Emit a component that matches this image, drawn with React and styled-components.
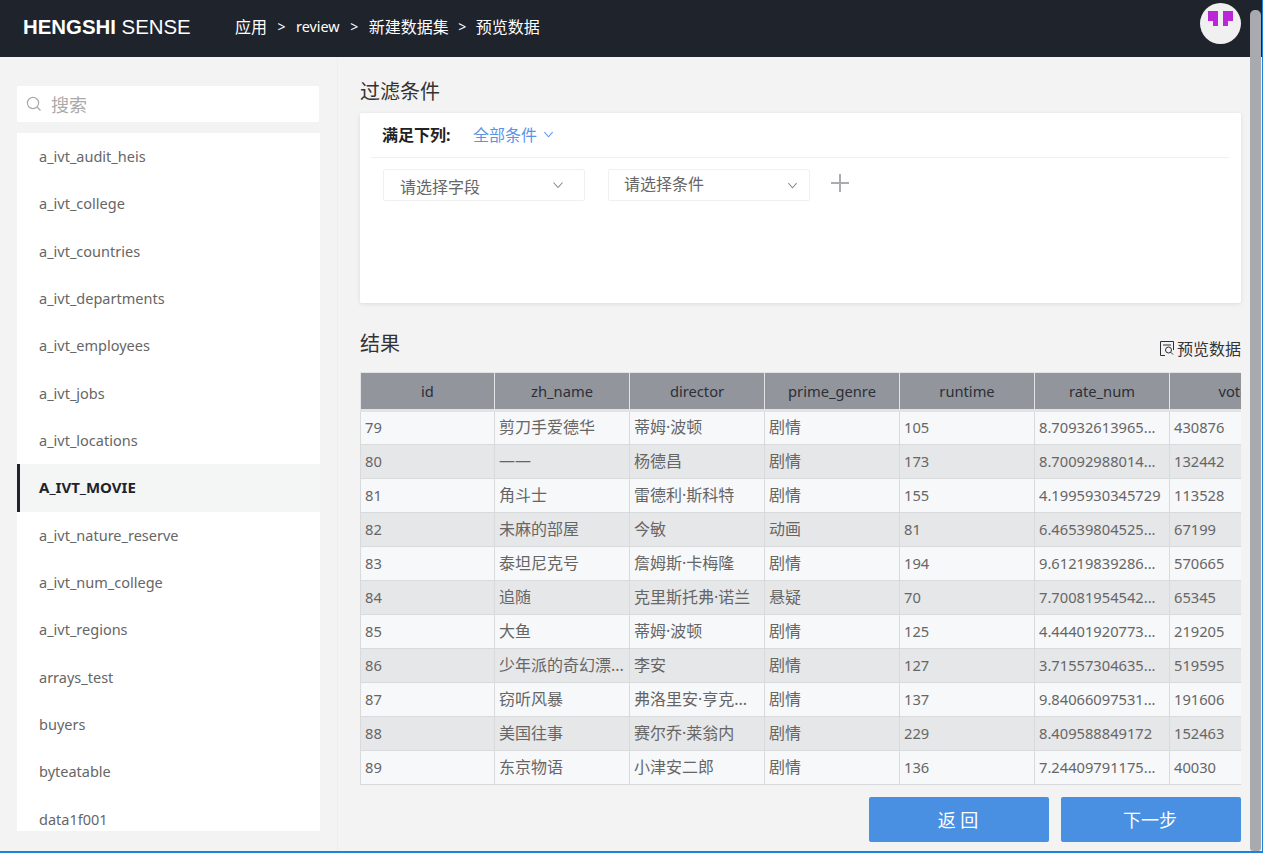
import React from 'react';
import styled, { createGlobalStyle } from 'styled-components';

const FONT = '"Noto Sans", "Noto Sans CJK SC", sans-serif';

const Global = createGlobalStyle`
  html, body { margin: 0; padding: 0; height: 100%; overflow: hidden; background: #f3f3f3; }
  body { font-family: ${FONT}; }
  * { box-sizing: border-box; }
`;

const Frame = styled.div`
  position: relative;
  width: 1263px;
  height: 853px;
  display: flex;
  flex-direction: column;
  background: #f3f3f3;
  border-right: 1px solid #1c82dc;
  border-bottom: 2px solid #1c82dc;
  overflow: hidden;
`;

const Header = styled.header`
  flex: none;
  height: 57px;
  background: #1e232c;
  display: flex;
  align-items: center;
  padding-left: 23px;
  color: #fff;
`;

const Logo = styled.div`
  font-family: "Liberation Sans", Arial, sans-serif;
  font-size: 20.4px;
  width: 212px;
  white-space: nowrap;
  margin-top: -3px;
  b { font-weight: 700; }
`;

const Crumbs = styled.nav`
  display: flex;
  align-items: center;
  font-size: 16px;
  margin-top: -5px;
`;

const CrumbLatin = styled.span`
  font-size: 14.4px;
`;

const Sep = styled.span`
  width: ${p => p.$w}px;
  text-align: center;
  font-size: 14px;
`;

const Avatar = styled.div`
  margin-left: auto;
  margin-right: 21px;
  margin-top: -10px;
  width: 41px;
  height: 41px;
  padding-top: 8px;
  border-radius: 50%;
  background: #f0f0f0;
  display: flex;
  align-items: flex-start;
  justify-content: center;
`;

const Scroll = styled.div`
  position: absolute;
  top: 10px;
  right: 1px;
  bottom: 0;
  width: 11px;
  background: #a9aaaf;
  border-radius: 5px 5px 3px 3px;
`;

const Body = styled.div`
  flex: 1;
  min-height: 0;
  display: flex;
`;

const Side = styled.aside`
  flex: none;
  width: 338px;
  border-right: 1px solid #eeeeee;
  padding: 29px 17px 20px 17px;
  display: flex;
  flex-direction: column;
`;

const Search = styled.div`
  flex: none;
  width: 302px;
  height: 36px;
  background: #fff;
  border-radius: 2px;
  display: flex;
  align-items: center;
  padding-left: 9px;
  gap: 9px;
  color: #aaa;
  font-size: 18px;
`;

const List = styled.ul`
  list-style: none;
  margin: 11px 0 0;
  padding: 0;
  width: 303px;
  height: 698px;
  background: #fff;
  overflow: hidden;
`;

const Item = styled.li`
  height: 47.33px;
  display: flex;
  align-items: center;
  padding-bottom: 1px;
  padding-left: ${p => (p.$active ? '19px' : '22px')};
  font-size: ${p => (p.$active ? '15px' : '14.5px')};
  color: ${p => (p.$active ? '#1e232c' : '#666')};
  font-weight: ${p => (p.$active ? 700 : 400)};
  background: ${p => (p.$active ? '#f4f5f5' : 'transparent')};
  border-left: ${p => (p.$active ? '3px solid #1e232c' : 'none')};
`;

const Main = styled.main`
  flex: 1;
  min-width: 0;
  padding: 20px 21px 0 22px;
  display: flex;
  flex-direction: column;
`;

const Title = styled.h2`
  margin: 0;
  font-size: 20px;
  font-weight: 400;
  line-height: 30px;
  color: #333;
`;

const Panel = styled.section`
  margin-top: 6px;
  width: 881px;
  height: 190px;
  background: #fff;
  border-radius: 2px;
  box-shadow: 0 1px 4px rgba(0, 0, 0, 0.1);
  padding: 0 12px 0 11px;
`;

const MatchRow = styled.div`
  height: 45px;
  border-bottom: 1px solid #f0f0f0;
  display: flex;
  align-items: center;
  padding: 0 0 2px 11px;
  font-size: 16px;
`;

const MatchLabel = styled.strong`
  width: 91px;
  color: #222;
  font-weight: 700;
`;

const MatchValue = styled.span`
  color: #5a94e6;
  display: flex;
  align-items: center;
  gap: 6px;
`;

const Filters = styled.div`
  display: flex;
  align-items: center;
  padding: 11px 0 0 12px;
`;

const Select = styled.div`
  width: 202px;
  height: 32px;
  margin-right: ${p => p.$gap}px;
  border: 1px solid #f0f0f0;
  border-radius: 2px;
  display: flex;
  align-items: center;
  justify-content: space-between;
  padding: 0 ${p => p.$pr}px 0 ${p => p.$pl}px;
  font-size: 16px;
  color: #666;
  span { position: relative; top: ${p => p.$shift}px; }
`;

const ResultHead = styled.div`
  margin-top: 26px;
  height: 43px;
  display: flex;
  justify-content: space-between;
`;

const PreviewLink = styled.div`
  display: flex;
  align-items: center;
  gap: 2px;
  font-size: 16px;
  color: #333;
  margin-top: 4px;
  height: 30px;
`;

const TableWrap = styled.div`
  width: 881px;
  height: 413px;
  overflow: hidden;
`;

const Table = styled.table`
  width: 945px;
  table-layout: fixed;
  border-collapse: collapse;
  border: 1px solid #d9dadc;
`;

const Th = styled.th`
  width: ${p => p.$w}px;
  height: 38px;
  padding: 0;
  background: #92959c;
  border: 1px solid #e2e3e5;
  border-bottom: 3px solid #e2e3e5;
  font-size: 14.7px;
  font-weight: 400;
  color: #2b2f38;
  text-align: center;
`;

const Tr = styled.tr`
  background: ${p => (p.$alt ? '#e6e7e9' : '#f7f8fa')};
`;

const Td = styled.td`
  height: 34px;
  padding: 0 4px ${p => (p.$cjk ? '4px' : '2px')};
  border: 1px solid #d9dadc;
  font-size: ${p => (p.$cjk ? '16px' : '14.7px')};
  color: #666;
  white-space: nowrap;
  overflow: hidden;
  text-overflow: ellipsis;
`;

const Actions = styled.div`
  margin-top: 12px;
  display: flex;
  justify-content: flex-end;
  gap: 12px;
`;

const Button = styled.button`
  width: 180px;
  height: 45px;
  border: none;
  border-radius: 2px;
  background: #4a90e2;
  color: #fff;
  font-family: ${FONT};
  font-size: 18px;
  padding: 0 2px 2px 0;
`;

const Chevron = ({ size = 12, color = '#888' }) => (
  <svg width={size} height={size} viewBox="0 0 12 12" fill="none" stroke={color} strokeWidth="1.1">
    <path d="M1.5 3.5 L6 8.5 L10.5 3.5" />
  </svg>
);

const tables = ['a_ivt_audit_heis','a_ivt_college','a_ivt_countries','a_ivt_departments','a_ivt_employees','a_ivt_jobs','a_ivt_locations','A_IVT_MOVIE','a_ivt_nature_reserve','a_ivt_num_college','a_ivt_regions','arrays_test','buyers','byteatable','data1f001'];
const cols = ['id','zh_name','director','prime_genre','runtime','rate_num','votes'];
const rows = [
  ['79','剪刀手爱德华','蒂姆·波顿','剧情','105','8.70932613965...','430876'],
  ['80','——','杨德昌','剧情','173','8.70092988014...','132442'],
  ['81','角斗士','雷德利·斯科特','剧情','155','4.1995930345729','113528'],
  ['82','未麻的部屋','今敏','动画','81','6.46539804525...','67199'],
  ['83','泰坦尼克号','詹姆斯·卡梅隆','剧情','194','9.61219839286...','570665'],
  ['84','追随','克里斯托弗·诺兰','悬疑','70','7.70081954542...','65345'],
  ['85','大鱼','蒂姆·波顿','剧情','125','4.44401920773...','219205'],
  ['86','少年派的奇幻漂...','李安','剧情','127','3.71557304635...','519595'],
  ['87','窃听风暴','弗洛里安·亨克...','剧情','137','9.84066097531...','191606'],
  ['88','美国往事','赛尔乔·莱翁内','剧情','229','8.409588849172','152463'],
  ['89','东京物语','小津安二郎','剧情','136','7.24409791175...','40030'],
];

export default function App() {
  return (
    <Frame>
      <Global />
      <Header>
        <Logo><b>HENGSHI</b> SENSE</Logo>
        <Crumbs>
          <span>应用</span><Sep $w={29}>&gt;</Sep><CrumbLatin>review</CrumbLatin><Sep $w={29}>&gt;</Sep><span>新建数据集</span><Sep $w={27}>&gt;</Sep><span>预览数据</span>
        </Crumbs>
        <Avatar>
          <svg width="25" height="15" viewBox="0 0 25 15" fill="#bb26d6">
            <path d="M0 0H10V15H5V10H0Z" />
            <path d="M15 0H25V10H20V15H15Z" />
          </svg>
        </Avatar>
      </Header>
      <Body>
        <Side>
          <Search>
            <svg width="16" height="16" viewBox="0 0 16 16" fill="none" stroke="#aaa" strokeWidth="1.2">
              <circle cx="7" cy="7" r="5.6" /><path d="M11 11 L14.5 14.5" />
            </svg>
            <span>搜索</span>
          </Search>
          <List>
            {tables.map(t => <Item key={t} $active={t === 'A_IVT_MOVIE'}>{t}</Item>)}
          </List>
        </Side>
        <Main>
          <Title>过滤条件</Title>
          <Panel>
            <MatchRow>
              <MatchLabel>满足下列:</MatchLabel>
              <MatchValue>全部条件<Chevron size={11} color="#5a94e6" /></MatchValue>
            </MatchRow>
            <Filters>
              <Select $gap={23} $shift={1} $pl={16} $pr={20}><span>请选择字段</span><Chevron /></Select>
              <Select $gap={21} $shift={-2} $pl={15} $pr={11}><span>请选择条件</span><Chevron size={11} /></Select>
              <svg width="18" height="18" viewBox="0 0 18 18" stroke="#a9abb0" strokeWidth="2" style={{ marginTop: -4 }}>
                <path d="M9 0V18M0 9H18" />
              </svg>
            </Filters>
          </Panel>
          <ResultHead>
            <Title>结果</Title>
            <PreviewLink>
              <svg width="16" height="16" viewBox="0 0 16 16" fill="none" stroke="#2b2f38" strokeWidth="1">
                <path d="M6 15.5H1.5V1.5H14.5V10" /><path d="M4 5H12" />
                <circle cx="9.5" cy="10" r="3" /><path d="M11.7 12.2 L14 14.5" />
              </svg>
              预览数据
            </PreviewLink>
          </ResultHead>
          <TableWrap>
            <Table>
              <thead><tr>{cols.map((c, i) => <Th key={c} $w={i === 0 ? 134 : 135}>{c}</Th>)}</tr></thead>
              <tbody>
                {rows.map((r, i) => (
                  <Tr key={r[0]} $alt={i % 2 === 1}>
                    {r.map((v, j) => <Td key={j} $cjk={/[\u4e00-\u9fff—]/.test(v)}>{v}</Td>)}
                  </Tr>
                ))}
              </tbody>
            </Table>
          </TableWrap>
          <Actions>
            <Button>返 回</Button>
            <Button>下一步</Button>
          </Actions>
        </Main>
      </Body>
      <Scroll />
    </Frame>
  );
}
